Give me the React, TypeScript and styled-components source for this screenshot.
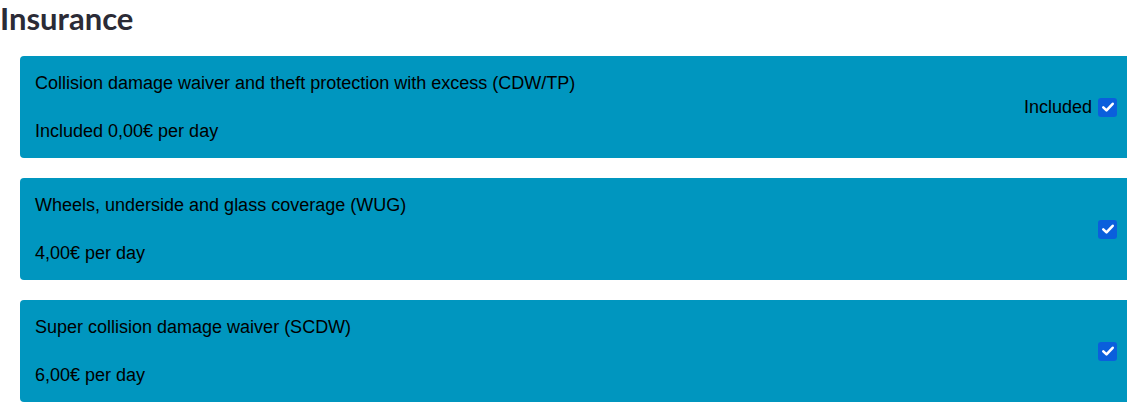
import React from 'react';
import styled, { createGlobalStyle } from 'styled-components';

const GlobalStyle = createGlobalStyle`
  body {
    margin: 0;
    background: #fff;
    font-family: 'Liberation Sans', Arial, sans-serif;
  }
`;

const Section = styled.section`
  width: 1137px;
  overflow: hidden;
`;

const Heading = styled.h3`
  font-family: 'Lato', sans-serif;
  font-weight: 700;
  font-size: 31px;
  line-height: 36px;
  color: #2b2b36;
  margin: 0 0 20px 0;
`;

const List = styled.div`
  display: flex;
  flex-direction: column;
  gap: 20px;
  padding-left: 20px;
  width: 1107px;
`;

const Card = styled.div`
  display: flex;
  justify-content: space-between;
  align-items: center;
  background-color: #0096bf;
  border-radius: 4px 0 0 4px;
  padding: 15px 10px 15px 15px;
  color: #000;
  font-size: 18px;
  line-height: 24px;
`;

const Info = styled.div`
  display: flex;
  flex-direction: column;
  gap: 24px;
`;

const Choice = styled.label`
  display: flex;
  align-items: center;
  gap: 6px;
`;

const Box = styled.span`
  display: inline-flex;
  align-items: center;
  justify-content: center;
  width: 19px;
  height: 19px;
  border-radius: 3px;
  background-color: #0a5fdc;
`;

type Cover = {
  name: string;
  price: string;
  label?: string;
};

const covers: Cover[] = [
  {
    name: 'Collision damage waiver and theft protection with excess (CDW/TP)',
    price: 'Included 0,00€ per day',
    label: 'Included',
  },
  { name: 'Wheels, underside and glass coverage (WUG)', price: '4,00€ per day' },
  { name: 'Super collision damage waiver (SCDW)', price: '6,00€ per day' },
];

function Check() {
  return (
    <Box>
      <svg width="14" height="14" viewBox="0 0 14 14">
        <path d="M2.3 7.4 L5.5 10.4 L11.7 3.8" fill="none" stroke="#fff" strokeWidth="2.6" strokeLinecap="round" strokeLinejoin="round" />
      </svg>
    </Box>
  );
}

export default function App() {
  return (
    <Section>
      <GlobalStyle />
      <Heading>Insurance</Heading>
      <List>
        {covers.map((c) => (
          <Card key={c.name}>
            <Info>
              <span>{c.name}</span>
              <span>{c.price}</span>
            </Info>
            <Choice>
              {c.label && <span>{c.label}</span>}
              <Check />
            </Choice>
          </Card>
        ))}
      </List>
    </Section>
  );
}
